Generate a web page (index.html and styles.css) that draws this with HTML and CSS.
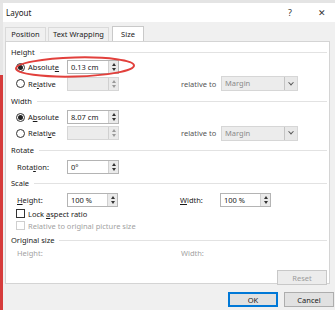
FILE: index.html
```html
<!DOCTYPE html>
<html lang="en">
<head>
    <meta charset="UTF-8">
    <meta name="viewport" content="width=device-width, initial-scale=1.0">
    <link rel="stylesheet" href="styles.css">
    <title>Layout</title>
</head>
<body>
    <div class="doc-strip"></div>
    <div class="window">
        <div class="doc-edge"></div>
        <div class="dialog">
            <header class="titlebar">
                <span class="title">Layout</span>
                <span class="help">?</span>
                <span class="close">&#x2715;</span>
            </header>
            <div class="dialog-body">
                <nav class="tabs">
                    <span class="tab">Position</span>
                    <span class="tab">Text Wrapping</span>
                    <span class="tab active">Size</span>
                </nav>
                <section class="panel">
                    <div class="group-head">Height</div>
                    <div class="row r-abs1">
                        <label class="opt"><span class="radio checked"></span><span>Absolut<u>e</u></span></label>
                        <div class="spin"><span class="val">0.13 cm</span><span class="arrows"><i class="up"></i><i class="down"></i></span></div>
                    </div>
                    <div class="row r-rel1">
                        <label class="opt"><span class="radio"></span><span>Re<u>l</u>ative</span></label>
                        <div class="spin disabled"><span class="val"></span><span class="arrows"><i class="up"></i><i class="down"></i></span></div>
                        <span class="label2">relative to</span>
                        <div class="select disabled"><span class="val">Margin</span><span class="drop"><i></i></span></div>
                    </div>

                    <div class="group-head g-width">Width</div>
                    <div class="row r-abs2">
                        <label class="opt"><span class="radio checked"></span><span>A<u>b</u>solute</span></label>
                        <div class="spin"><span class="val">8.07 cm</span><span class="arrows"><i class="up"></i><i class="down"></i></span></div>
                    </div>
                    <div class="row r-rel2">
                        <label class="opt"><span class="radio"></span><span>Relati<u>v</u>e</span></label>
                        <div class="spin disabled"><span class="val"></span><span class="arrows"><i class="up"></i><i class="down"></i></span></div>
                        <span class="label2">relative to</span>
                        <div class="select disabled"><span class="val">Margin</span><span class="drop"><i></i></span></div>
                    </div>

                    <div class="group-head g-rotate">Rotate</div>
                    <div class="row r-rot">
                        <label class="opt plain"><span>Rota<u>t</u>ion:</span></label>
                        <div class="spin"><span class="val">0°</span><span class="arrows"><i class="up"></i><i class="down"></i></span></div>
                    </div>

                    <div class="group-head g-scale">Scale</div>
                    <div class="row r-scale">
                        <label class="opt plain"><span><u>H</u>eight:</span></label>
                        <div class="spin"><span class="val">100 %</span><span class="arrows"><i class="up"></i><i class="down"></i></span></div>
                        <span class="label2"><u>W</u>idth:</span>
                        <div class="spin"><span class="val">100 %</span><span class="arrows"><i class="up"></i><i class="down"></i></span></div>
                    </div>
                    <div class="row check-row r-lock">
                        <label class="opt"><span class="check"></span><span>Lock <u>a</u>spect ratio</span></label>
                    </div>
                    <div class="row check-row r-orig disabled-text">
                        <label class="opt"><span class="check off"></span><span>Relative to original picture size</span></label>
                    </div>

                    <div class="group-head g-orig">Original size</div>
                    <div class="row r-size disabled-text">
                        <label class="opt plain"><span>Height:</span></label>
                        <span class="gap-cell"></span>
                        <span class="label2">Width:</span>
                    </div>
                    <div class="reset-row">
                        <button class="btn" disabled>Reset</button>
                    </div>

                    <svg class="mark" width="130" height="30" viewBox="0 0 130 30">
                        <ellipse cx="65" cy="15" rx="59" ry="9.5" fill="none" stroke="#e2403c" stroke-width="2" transform="rotate(-1.5 65 15)"/>
                    </svg>
                </section>
                <footer class="actions">
                    <button class="btn primary">OK</button>
                    <button class="btn">Cancel</button>
                </footer>
            </div>
        </div>
    </div>
</body>
</html>
```
FILE: styles.css
```css
*, ::after, ::before{
    margin: 0;
    padding: 0;
    box-sizing: border-box;
}
body{
    width: 335px;
    height: 310px;
    overflow: hidden;
    background: #f0f0f0;
    font-family: 'Noto Sans', 'Open Sans', sans-serif;
    font-size: 7.5px;
    color: #1a1a1a;
}
.doc-strip{
    height: 3px;
    background: #e4e4e4;
}
.window{
    display: flex;
    height: 307px;
}
.doc-edge{
    width: 3px;
    background: linear-gradient(#e6e6e6 0, #e6e6e6 72px, #d63c3c 72px);
}
.dialog{
    flex: 1;
    display: flex;
    flex-direction: column;
}
.titlebar{
    height: 19px;
    background: #fff;
    display: flex;
    align-items: center;
    padding-left: 3px;
    .title{
        flex: 1;
        font-size: 8px;
    }
    .help{
        width: 30px;
        font-size: 9px;
        color: #333;
    }
    .close{
        width: 17px;
        font-size: 9px;
        color: #333;
    }
}
.dialog-body{
    flex: 1;
    padding: 0 5px 0 2px;
    display: flex;
    flex-direction: column;
}
.tabs{
    display: flex;
    align-items: flex-end;
    height: 19px;
    gap: 2px;
    .tab{
        height: 14px;
        line-height: 13px;
        white-space: nowrap;
        text-align: center;
        border: 1px solid #dadada;
        border-bottom: none;
        background: #f0f0f0;
    }
    .tab:first-child{
        width: 41px;
    }
    .tab:nth-child(2){
        width: 61px;
    }
    .active{
        width: 32px;
        height: 16px;
        line-height: 15px;
        background: #fff;
        border-color: #c9c9c9;
        position: relative;
        top: 1px;
        margin-left: 1px;
    }
}
.panel{
    position: relative;
    height: 243px;
    background: #fff;
    border: 1px solid #d4d4d4;
    padding: 3px 2px 0 0;
}
.group-head{
    height: 14px;
    display: flex;
    align-items: center;
    gap: 5px;
    padding-left: 5px;
    &::after{
        content: '';
        flex: 1;
        height: 1px;
        background: #e2e2e2;
    }
}
.g-width{ margin-top: 3px; }
.g-rotate{ margin-top: 3px; }
.g-scale{ margin-top: 2px; }
.g-orig{ margin-top: 2px; }
.row{
    height: 14px;
    display: flex;
    align-items: center;
    padding-left: 10px;
}
.r-abs1{ margin-top: 1px; }
.r-rel1{ margin-top: 2px; height: 15px; }
.r-abs2{ margin-top: 2px; }
.r-rel2{ margin-top: 2px; }
.r-rot{ margin-top: 3px; }
.r-scale{ margin-top: 3px; }
.r-lock{ margin-top: 1px; height: 11px; }
.r-orig{ margin-top: 1px; height: 11px; }
.r-size{ margin-top: 0; height: 12px; }
.opt{
    width: 51px;
    display: flex;
    align-items: center;
    gap: 3px;
    white-space: nowrap;
    u{
        text-decoration-thickness: 1px;
        text-underline-offset: 1px;
    }
}
.check-row .opt{
    width: auto;
}
.plain{
    padding-left: 1px;
}
.radio{
    width: 9px;
    height: 9px;
    border: 1px solid #333;
    border-radius: 50%;
    display: flex;
    align-items: center;
    justify-content: center;
    &.checked::after{
        content: '';
        width: 5px;
        height: 5px;
        border-radius: 50%;
        background: #222;
    }
}
.check{
    width: 9px;
    height: 9px;
    border: 1px solid #333;
    background: #fff;
    &.off{
        border-color: #cfcfcf;
    }
}
.disabled-text{
    color: #a2a2a2;
}
.spin, .select{
    width: 52px;
    height: 14px;
    display: flex;
    border: 1px solid #b4b4b4;
    background: #fff;
    .val{
        flex: 1;
        padding-left: 3px;
        line-height: 12px;
    }
    &.disabled{
        background: #ececec;
        border-color: #d6d6d6;
    }
}
.arrows{
    width: 10px;
    display: flex;
    flex-direction: column;
    justify-content: center;
    align-items: center;
    gap: 2px;
    background: #eaeaea;
    border-left: 1px solid #d0d0d0;
    i{
        width: 0;
        height: 0;
        border-left: 2.5px solid transparent;
        border-right: 2.5px solid transparent;
    }
    .up{ border-bottom: 3px solid #333; }
    .down{ border-top: 3px solid #333; }
}
.disabled .arrows i.up{ border-bottom-color: #999; }
.disabled .arrows i.down{ border-top-color: #999; }
.label2{
    margin-left: 62px;
    width: 40px;
    color: #555;
    u{
        text-underline-offset: 1px;
    }
}
.r-scale .label2, .r-size .label2{
    color: inherit;
}
.r-scale .spin{
    width: 51px;
}
.gap-cell{
    width: 52px;
}
.select{
    width: 77px;
    height: 15px;
    .val{
        color: #8a8a8a;
    }
    .drop{
        width: 13px;
        border-left: 1px solid #c4c4c4;
        background: #e8e8e8;
        display: flex;
        align-items: center;
        justify-content: center;
        i{
            width: 4px;
            height: 4px;
            border-right: 1px solid #555;
            border-bottom: 1px solid #555;
            transform: rotate(45deg) translate(-1px, -1px);
        }
    }
}
.reset-row{
    display: flex;
    justify-content: flex-end;
    margin-top: 11px;
}
.btn{
    width: 50px;
    height: 15px;
    font-family: inherit;
    font-size: 7.5px;
    color: #1a1a1a;
    background: #e1e1e1;
    border: 1px solid #adadad;
    &:disabled{
        color: #9c9c9c;
        background: #ececec;
        border-color: #c8c8c8;
    }
}
.primary{
    border: 1px solid #0078d7;
    box-shadow: inset 0 0 0 1px #0078d7;
}
.actions{
    display: flex;
    justify-content: flex-end;
    gap: 6px;
    padding-top: 8px;
    margin-right: -4px;
}
.mark{
    position: absolute;
    left: 4px;
    top: 10px;
}
```
